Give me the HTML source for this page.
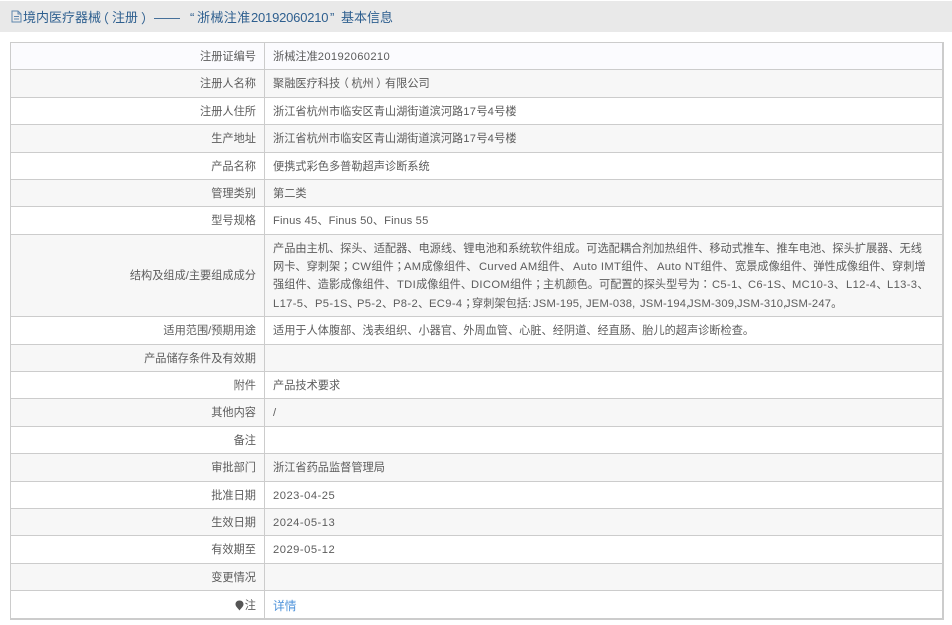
<!DOCTYPE html>
<html><head><meta charset="utf-8"><title>基本信息</title>
<style>
html,body{margin:0;padding:0;background:#fff}
body{width:952px;height:625px;overflow:hidden;position:relative;font-family:"Liberation Sans","Noto Sans CJK SC",sans-serif;font-size:11.2px;color:#5c5c5c}
.head{position:absolute;left:0;top:1px;width:952px;height:31px;background:#e9e9e9;color:#2e5f8f;font-size:13px;white-space:nowrap}
.head svg{position:absolute;left:11px;top:9px}
.head span{position:absolute;top:8px;line-height:18px}
.tc{font-family:"Noto Sans CJK TC",sans-serif;line-height:0}
.tb{position:absolute;left:10px;top:42px;width:934px;height:578px;box-sizing:border-box;border-left:1px solid #ccc;border-right:2px solid #ccc;border-top:1px solid #ccc;border-bottom:2px solid #ccc;background:#fff}
.r{position:absolute;left:11px;width:931px;box-sizing:border-box;border-top:1px solid #ccc;white-space:nowrap}
.r.g{background:#f7f7f7}
.l{position:absolute;left:0;width:245px;text-align:right;top:5px;height:18px;line-height:18px}
.v{position:absolute;left:262px;top:5px;height:18px;line-height:18px;white-space:nowrap}
.d{position:absolute;left:264px;top:42px;width:1px;height:576px;background:#ccc;z-index:2}
.s{position:absolute;white-space:nowrap;line-height:18px;z-index:3}
i{font-style:normal;letter-spacing:.35px}
a{color:#4a90d9;text-decoration:none;font-size:11.8px}
</style></head><body>
<div class="head"><svg width="11" height="13" viewBox="0 0 11 13"><path d="M1 1H7L10 4V12H1Z M7 1V4H10 M3 6.5H8 M3 9H8" fill="none" stroke="#5f86ad" stroke-width="1"/></svg>
<span style="left:23px">境内医疗器械</span><span class="tc" style="left:96px;line-height:18px">（</span><span style="left:112px">注册</span><span class="tc" style="left:141px;line-height:18px">）</span><span style="left:154px">——</span><span style="left:190px">“</span><span style="left:197px;letter-spacing:.4px">浙械注准</span><span style="left:251px;letter-spacing:-.2px">20192060210</span><span style="left:330px">”</span><span style="left:341px">基本信息</span></div>
<div class="tb"></div>
<div class="r" style="top:43px;height:26px;background:#fbfbfe;border-top:0"></div>
<div class="r" style="top:42px;height:27px;background:transparent"><div class="l">注册证编号</div><div class="v">浙械注准<i>20192060210</i></div></div>
<div class="r g" style="top:69px;height:28px"><div class="l">注册人名称</div><div class="v">聚融医疗科技<span class="tc" style="position:relative;left:-2.5px">（</span>杭州<span class="tc" style="position:relative;left:2.5px">）</span>有限公司</div></div>
<div class="r" style="top:97px;height:27px"><div class="l">注册人住所</div><div class="v">浙江省杭州市临安区青山湖街道滨河路<i>17</i>号<i>4</i>号楼</div></div>
<div class="r g" style="top:124px;height:28px"><div class="l">生产地址</div><div class="v">浙江省杭州市临安区青山湖街道滨河路<i>17</i>号<i>4</i>号楼</div></div>
<div class="r" style="top:152px;height:27px"><div class="l">产品名称</div><div class="v">便携式彩色多普勒超声诊断系统</div></div>
<div class="r g" style="top:179px;height:27px"><div class="l">管理类别</div><div class="v">第二类</div></div>
<div class="r" style="top:206px;height:28px"><div class="l">型号规格</div><div class="v"><i style="letter-spacing:.18px">Finus 45</i>、<i style="letter-spacing:.18px">Finus 50</i>、<i style="letter-spacing:.18px">Finus 55</i></div></div>
<div class="r g" style="top:234px;height:82px"><div class="l" style="top:32px">结构及组成/主要组成成分</div></div>
<div class="s" style="left:273px;top:240px">产品由主机、探头、适配器、电源线、锂电池和系统软件组成。可选配耦合剂加热组件、移动式推车、推车电池、探头扩展器、无线</div>
<div class="s" style="left:273px;top:258px">网卡、穿刺架<span class="tc">；</span></div>
<div class="s" style="left:352px;top:258px"><i>CW</i>组件<span class="tc">；</span></div>
<div class="s" style="left:404px;top:258px"><i>AM</i>成像组件、</div>
<div class="s" style="left:479px;top:258px"><i>Curved AM</i>组件、</div>
<div class="s" style="left:573px;top:258px"><i>Auto IMT</i>组件、</div>
<div class="s" style="left:657px;top:258px"><i>Auto NT</i>组件、</div>
<div class="s" style="left:735px;top:258px">宽景成像组件、弹性成像组件、</div>
<div class="s" style="left:892px;top:258px">穿刺增</div>
<div class="s" style="left:273px;top:276px">强组件、造影成像组件、</div>
<div class="s" style="left:397px;top:276px"><i>TDI</i>成像组件、</div>
<div class="s" style="left:471px;top:276px"><i>DICOM</i>组件<span class="tc">；</span></div>
<div class="s" style="left:543px;top:276px">主机颜色。可配置的探头型号为<span class="tc">：</span></div>
<div class="s" style="left:712px;top:276px"><i>C5-1</i>、</div>
<div class="s" style="left:748px;top:276px"><i>C6-1S</i>、</div>
<div class="s" style="left:792px;top:276px"><i>MC10-3</i>、</div>
<div class="s" style="left:846px;top:276px"><i>L12-4</i>、</div>
<div class="s" style="left:887px;top:276px"><i>L13-3</i>、</div>
<div class="s" style="left:273px;top:295px"><i>L17-5</i>、</div>
<div class="s" style="left:315px;top:295px"><i>P5-1S</i>、</div>
<div class="s" style="left:357px;top:295px"><i>P5-2</i>、</div>
<div class="s" style="left:393px;top:295px"><i>P8-2</i>、</div>
<div class="s" style="left:429px;top:295px"><i>EC9-4</i><span class="tc">；</span></div>
<div class="s" style="left:472px;top:295px">穿刺架包括:</div>
<div class="s" style="left:533px;top:295px"><i style="letter-spacing:.2px">JSM-195,</i></div>
<div class="s" style="left:586px;top:295px"><i style="letter-spacing:.2px">JEM-038,</i></div>
<div class="s" style="left:640px;top:295px"><i style="letter-spacing:.2px">JSM-194,</i></div>
<div class="s" style="left:688px;top:295px"><i style="letter-spacing:.2px">JSM-309,</i></div>
<div class="s" style="left:737px;top:295px"><i style="letter-spacing:.2px">JSM-310,</i></div>
<div class="s" style="left:785px;top:295px"><i style="letter-spacing:.2px">JSM-247</i>。</div>
<div class="r" style="top:316px;height:28px"><div class="l">适用范围/预期用途</div><div class="v">适用于人体腹部、浅表组织、小器官、外周血管、心脏、经阴道、经直肠、胎儿的超声诊断检查。</div></div>
<div class="r g" style="top:344px;height:27px"><div class="l">产品储存条件及有效期</div></div>
<div class="r" style="top:371px;height:27px"><div class="l">附件</div><div class="v">产品技术要求</div></div>
<div class="r g" style="top:398px;height:28px"><div class="l">其他内容</div><div class="v">/</div></div>
<div class="r" style="top:426px;height:27px"><div class="l">备注</div></div>
<div class="r g" style="top:453px;height:28px"><div class="l">审批部门</div><div class="v">浙江省药品监督管理局</div></div>
<div class="r" style="top:481px;height:27px"><div class="l">批准日期</div><div class="v"><i style="letter-spacing:.5px">2023-04-25</i></div></div>
<div class="r g" style="top:508px;height:27px"><div class="l">生效日期</div><div class="v"><i style="letter-spacing:.5px">2024-05-13</i></div></div>
<div class="r" style="top:535px;height:28px"><div class="l">有效期至</div><div class="v"><i style="letter-spacing:.5px">2029-05-12</i></div></div>
<div class="r g" style="top:563px;height:27px"><div class="l">变更情况</div></div>
<div class="r" style="top:590px;height:28px"><div class="l" style="top:6px"><svg width="9" height="11" viewBox="0 0 9 11" style="margin-right:1px;vertical-align:-2px"><path d="M4.5 0.5C7 0.5 8.5 2.2 8.5 4.2C8.5 6.5 6 8 4.5 10.5C3 8 0.5 6.5 0.5 4.2C0.5 2.2 2 0.5 4.5 0.5Z" fill="#555"/></svg>注</div><div class="v" style="top:6px"><a>详情</a></div></div>
<div class="d"></div>
</body></html>
